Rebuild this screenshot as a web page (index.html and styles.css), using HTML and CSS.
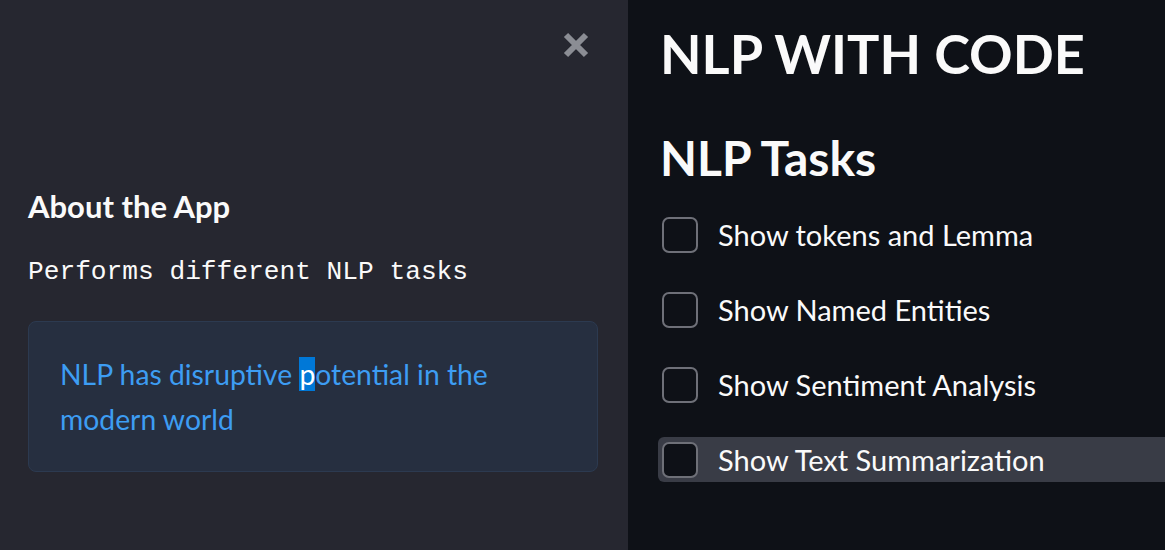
FILE: index.html
```html
<!DOCTYPE html>
<html>
<head>
<meta charset="utf-8">
<link rel="stylesheet" href="styles.css">
</head>
<body>
<div class="app">
  <aside class="sidebar">
    <div class="sidebar-top">
      <button class="close" aria-label="Close">
        <svg width="28" height="28" viewBox="0 0 28 28"><path d="M4 4 L24 24 M24 4 L4 24" stroke="#8b8d94" stroke-width="6" stroke-linecap="butt"/></svg>
      </button>
    </div>
    <h3 class="about">About the App</h3>
    <p class="mono">Performs different NLP tasks</p>
    <div class="info">
      <p>NLP has disruptive <span class="sel">p</span>otential in the modern world</p>
    </div>
  </aside>
  <main class="main">
    <h1 class="title">NLP WITH CODE</h1>
    <h2 class="subtitle">NLP Tasks</h2>
    <div class="checks">
      <label class="check"><span class="box"></span><span class="label">Show tokens and Lemma</span></label>
      <label class="check"><span class="box"></span><span class="label">Show Named Entities</span></label>
      <label class="check"><span class="box"></span><span class="label">Show Sentiment Analysis</span></label>
      <label class="check hover"><span class="box"></span><span class="label">Show Text Summarization</span></label>
    </div>
  </main>
</div>
</body>
</html>
```
FILE: styles.css
```css
* { box-sizing: border-box; }
html, body { margin: 0; padding: 0; }
body {
  width: 1165px;
  height: 550px;
  overflow: hidden;
  font-family: Lato, "Noto Sans", sans-serif;
  color: #fafafa;
  background: #0e1117;
}
.app { display: flex; height: 550px; }
.sidebar {
  width: 628px;
  flex: none;
  background: #262730;
  padding: 0 30px 0 28px;
  display: flex;
  flex-direction: column;
}
.sidebar-top {
  display: flex;
  justify-content: flex-end;
  padding: 31px 8px 0 0;
  height: 176px;
}
.close {
  background: none;
  border: none;
  padding: 0;
  width: 28px;
  height: 28px;
  cursor: pointer;
}
.close svg { display: block; }
.about {
  margin: 0;
  font-size: 31px;
  font-weight: 700;
  line-height: 60px;
}
.mono {
  margin: 16px 0 0 0;
  font-family: "Liberation Mono", monospace;
  font-size: 26.2px;
  line-height: 40px;
}
.info {
  margin-top: 29px;
  background: #262f40;
  border: 1px solid #2c3a50;
  border-radius: 8px;
  padding: 30px 31px 24px 31px;
  height: 151px;
}
.info p {
  margin: 0;
  color: #3d9df3;
  font-size: 28.3px;
  line-height: 45px;
}
.sel { background: #0078d7; color: #fff; }
.main {
  flex: 1;
  padding: 0 0 0 30px;
}
.title {
  margin: 9px 0 0 2px;
  font-size: 54px;
  font-weight: 700;
  line-height: 90px;
}
.subtitle {
  margin: 29px 0 0 2px;
  font-size: 48px;
  font-weight: 700;
  line-height: 60px;
}
.checks {
  margin-top: 24px;
  display: flex;
  flex-direction: column;
  gap: 30px;
}
.check {
  display: flex;
  align-items: center;
  height: 45px;
  padding-left: 4px;
  border-radius: 6px 0 0 6px;
}
.check.hover { background: #393c46; }
.box {
  width: 36px;
  height: 36px;
  border: 2px solid #6e7078;
  border-radius: 7px;
  background: #0e1117;
  flex: none;
}
.label {
  margin-left: 20px;
  font-size: 29px;
  color: #fafafa;
}
```
